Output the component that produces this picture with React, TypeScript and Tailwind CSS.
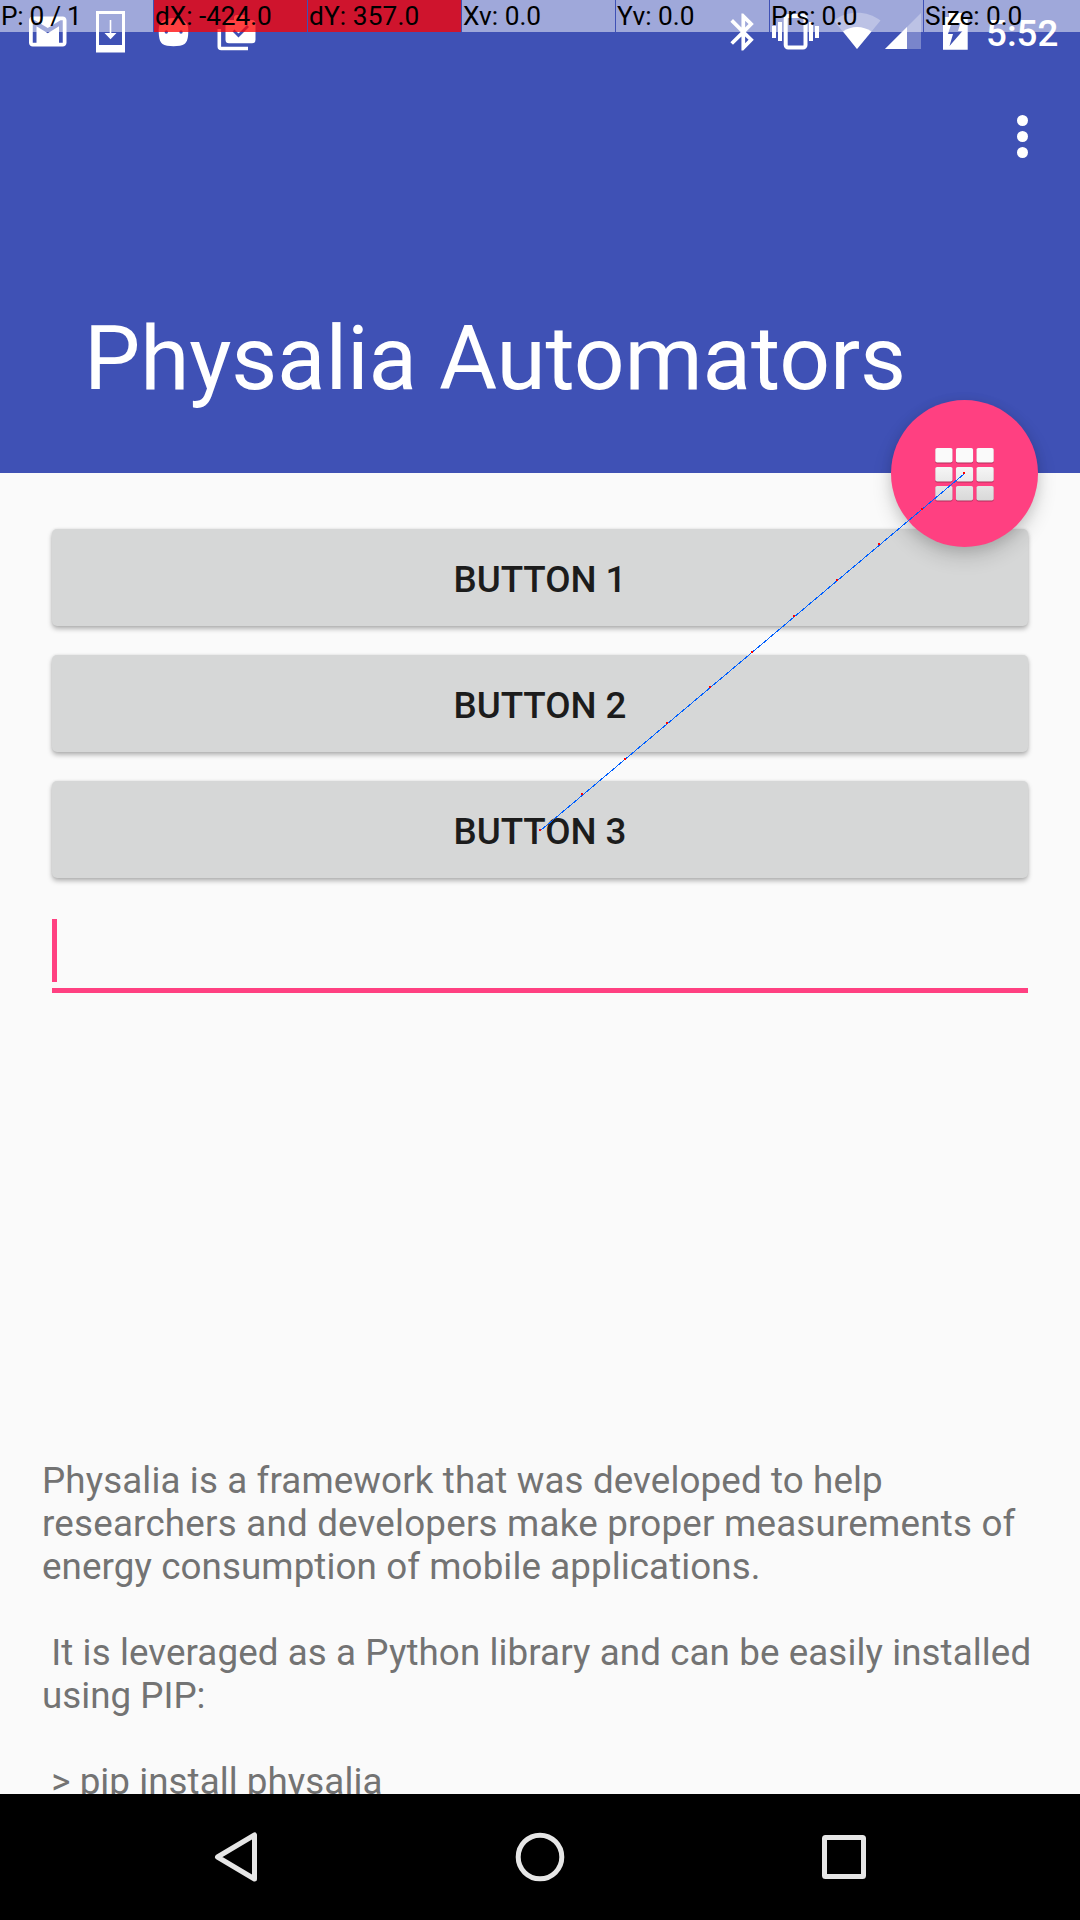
import React from "react";

const touchCells = [
  { label: "P: 0 / 1", tone: "bg-white/50 tracking-[-0.3px]" },
  { label: "dX: -424.0", tone: "bg-[#ff0000]/75 tracking-[-0.05px]" },
  { label: "dY: 357.0", tone: "bg-[#ff0000]/75 tracking-[0.1px]" },
  { label: "Xv: 0.0", tone: "bg-white/50" },
  { label: "Yv: 0.0", tone: "bg-white/50" },
  { label: "Prs: 0.0", tone: "bg-white/50 tracking-[-0.25px]" },
  { label: "Size: 0.0", tone: "bg-white/50 tracking-[-0.1px]" },
];

const buttons = ["Button 1", "Button 2", "Button 3"];

const description = [
  { text: "Physalia is a framework that was developed to help", tracking: "tracking-[0.12px]" },
  { text: "researchers and developers make proper measurements of", tracking: "tracking-[0.21px]" },
  { text: "energy consumption of mobile applications.", tracking: "tracking-[0.09px]" },
  { text: " ", tracking: "" },
  { text: " It is leveraged as a Python library and can be easily installed", tracking: "tracking-[0.09px]" },
  { text: "using PIP:", tracking: "" },
  { text: " ", tracking: "" },
  { text: " > pip install physalia", tracking: "tracking-[0.06px]" },
];

function NotificationIcons() {
  return (
    <svg className="h-[60px] w-[270px]" viewBox="0 0 270 60" fill="none">
      <path
        transform="translate(25.25 8.9) scale(1.875)"
        d="M20 18h-2V9.250L12 13 6 9.250V18H4V6h1.200l6.800 4.250L18.800 6H20v12zm0-14H4c-1.110 0-1.990.890-1.990 2L2 18c0 1.100.890 2 2 2h16c1.100 0 2-.900 2-2V6c0-1.110-.900-2-2-2z"
        fill="#fff"
      />
      <path d="M96 11h29v41.500H96zM99 14v31h23V14z" fill="#fff" fillRule="evenodd" />
      <path d="M109.700 20h1.600v13h5.200l-6 6.200-6-6.200h5.200z" fill="#fff" />
      <path d="M158.700 29.500C158.700 22 164 18 173.500 18s14.800 4 14.800 11.500c0 8-.8 12-3.800 14.500-4 3-18 3-22 0-3-2.500-3.800-6.500-3.800-14.500z" fill="#fff" />
      <circle cx="166.300" cy="32" r="1.700" fill="#3f51b5" />
      <circle cx="181" cy="32" r="1.700" fill="#3f51b5" />
      <path d="M219.300 29v17.500a2 2 0 0 0 2 2H248" stroke="#fff" strokeWidth="3.600" />
      <path d="M229 20h5v-2a3 3 0 0 1 3-3h7a3 3 0 0 1 3 3v2h5a3.500 3.500 0 0 1 3.500 3.500V39.700a3.500 3.500 0 0 1-3.500 3.500h-23a3.500 3.500 0 0 1-3.500-3.500V23.500A3.500 3.500 0 0 1 229 20z" fill="#fff" />
      <path d="M233.500 30.500l5 5 9.500-9.500" stroke="#3f51b5" strokeWidth="2.800" />
    </svg>
  );
}

function SystemIcons() {
  return (
    <svg className="h-[60px] w-[250px]" viewBox="720 0 250 60" fill="none">
      <path
        transform="translate(721.200 9.900) scale(1.840)"
        d="M17.710 7.710L12 2h-1v7.590L6.410 5 5 6.410 10.590 12 5 17.590 6.410 19 11 14.410V22h1l5.710-5.710-4.300-4.290 4.300-4.290zM13 5.830l1.880 1.880L13 9.590V5.830zm1.880 10.460L13 18.170v-3.760l1.880 1.880z"
        fill="#fff"
      />
      <rect x="785.700" y="16" width="19.800" height="31.500" rx="2.500" stroke="#fff" strokeWidth="4" />
      <path d="M774 26v12M780 22v19M811 22v19M817 26v12" stroke="#fff" strokeWidth="4" />
      <path d="M857 49L833.800 20.500C847 10 867 10 880.500 20.500z" fill="#fff" fillOpacity=".3" />
      <path d="M857 49L843 31.500c8-6 20-6 28.500 0z" fill="#fff" />
      <path d="M921 13v36h-36z" fill="#fff" fillOpacity=".3" />
      <path d="M907 27v22h-22z" fill="#fff" />
      <path d="M943 17h6v-4h13v4h5.700v32.800H943z" fill="#fff" />
      <path d="M951.500 23h9l-2.500 8h4.500L949.500 46l3.500-12h-5z" fill="#3f51b5" />
    </svg>
  );
}

function StatusBar() {
  return (
    <div className="flex h-[60px] justify-between">
      <NotificationIcons />
      <div className="flex">
        <SystemIcons />
        <span className="mt-[12px] w-[93px] -ml-[1px] mr-[18px] pl-[17px] text-[36.750px] leading-[43px] font-medium text-white">5:52</span>
      </div>
    </div>
  );
}

function TouchReadout() {
  return (
    <div className="absolute inset-x-0 top-0 flex h-8 gap-px text-[26.250px] leading-[33px] text-black">
      {touchCells.map((c) => (
        <div key={c.label} className={`h-8 w-[153px] shrink-0 pl-px whitespace-nowrap last:w-auto last:flex-1 ${c.tone}`}>
          {c.label}
        </div>
      ))}
    </div>
  );
}

function GridIcon() {
  return (
    <svg className="h-[56px] w-[60px]" viewBox="0 0 60 56">
      <defs>
        <linearGradient id="tile" gradientUnits="userSpaceOnUse" x1="0" y1="16" x2="0" y2="54">
          <stop offset="0" stopColor="#fafafa" />
          <stop offset="1" stopColor="#d9d9d9" />
        </linearGradient>
      </defs>
      {[2, 21, 40].map((y) =>
        [0.3, 20.9, 41.5].map((x) => (
          <g key={`${x}-${y}`}>
            <rect x={x} y={y + 0.8} width="17.200" height="14.800" rx="1.800" fill="#000" fillOpacity=".3" />
            <rect x={x} y={y} width="17.200" height="14.600" rx="1.800" fill="url(#tile)" />
          </g>
        )),
      )}
    </svg>
  );
}

function TouchTrail() {
  const points = [0, 1, 2, 3, 4, 5, 6, 7, 8, 9, 10];
  return (
    <svg className="pointer-events-none absolute top-[468px] left-[535px] h-[367px] w-[434px]" viewBox="535 468 434 367" shapeRendering="crispEdges">
      <path d="M540.500 830.500L964.500 473.500" stroke="#0060ff" strokeWidth="1" />
      {points.map((i) => (
        <rect key={i} x={Math.round(539 + i * 42.4)} y={Math.round(829 - i * 35.7)} width="2" height="2" fill="#ff0000" />
      ))}
    </svg>
  );
}

function NavBar() {
  return (
    <nav className="flex h-[126px] shrink-0 items-center justify-between bg-black px-[212px]">
      <svg className="h-[56px] w-[48px]" viewBox="212 1829 48 56" fill="none">
        <path d="M217.500 1857L254.500 1835v44z" stroke="#e6e6e6" strokeWidth="5" strokeLinejoin="round" />
      </svg>
      <svg className="h-[56px] w-[56px]" viewBox="0 0 56 56" fill="none">
        <circle cx="28" cy="28" r="21.800" stroke="#e6e6e6" strokeWidth="5" />
      </svg>
      <svg className="h-[56px] w-[48px]" viewBox="820 1829 48 56" fill="none">
        <rect x="824.500" y="1837.500" width="39" height="39" rx="1" stroke="#e6e6e6" strokeWidth="5" />
      </svg>
    </nav>
  );
}

export default function App() {
  return (
    <div className="relative flex h-[1920px] w-[1080px] flex-col overflow-hidden bg-[#fafafa] font-['Roboto',sans-serif]">
      <header className="flex h-[473px] shrink-0 flex-col bg-[#3f51b5]">
        <StatusBar />
        <div className="mt-[55px] mr-[52px] flex w-[11px] flex-col gap-[5px] self-end">
          <i className="size-[11px] rounded-full bg-white" />
          <i className="size-[11px] rounded-full bg-white" />
          <i className="size-[11px] rounded-full bg-white" />
        </div>
        <h1 className="mt-[148px] pl-[84px] text-[89.250px] leading-[106px] font-normal tracking-[-0.16px] whitespace-nowrap text-white">Physalia Automators</h1>
      </header>

      <main className="flex min-h-0 flex-1 flex-col overflow-hidden">
        <div className="flex flex-col gap-[29px] px-[52px] pt-[56px]">
          {buttons.map((b) => (
            <button
              key={b}
              className="h-[97px] rounded-[5px] bg-[#d6d7d7] pt-[4px] text-[36.750px] leading-[43px] font-medium tracking-[-0.05px] text-[#1c1c1c] uppercase shadow-[0_3px_5px_rgba(0,0,0,0.28),0_0_3px_rgba(0,0,0,0.1)]"
            >
              {b}
            </button>
          ))}
        </div>
        <div className="mx-[52px] mt-[41px] h-[74px] shrink-0 border-b-[5px] border-[#ff4081]">
          <div className="h-[63px] w-[5px] bg-[#ff4081]" />
        </div>
        <div className="mt-[466px] pl-[42px] text-[36.750px] leading-[43px] whitespace-pre text-[#737373]">
          {description.map((line, i) => (
            <p key={i} className={`h-[43px] ${line.tracking}`}>
              {line.text}
            </p>
          ))}
        </div>
      </main>

      <NavBar />

      <button className="absolute top-[400px] left-[891px] flex size-[147px] items-center justify-center rounded-full bg-[#ff4081] shadow-[0_10px_20px_rgba(0,0,0,0.16),0_2px_12px_rgba(0,0,0,0.1)]">
        <GridIcon />
      </button>
      <TouchTrail />
      <TouchReadout />
    </div>
  );
}
